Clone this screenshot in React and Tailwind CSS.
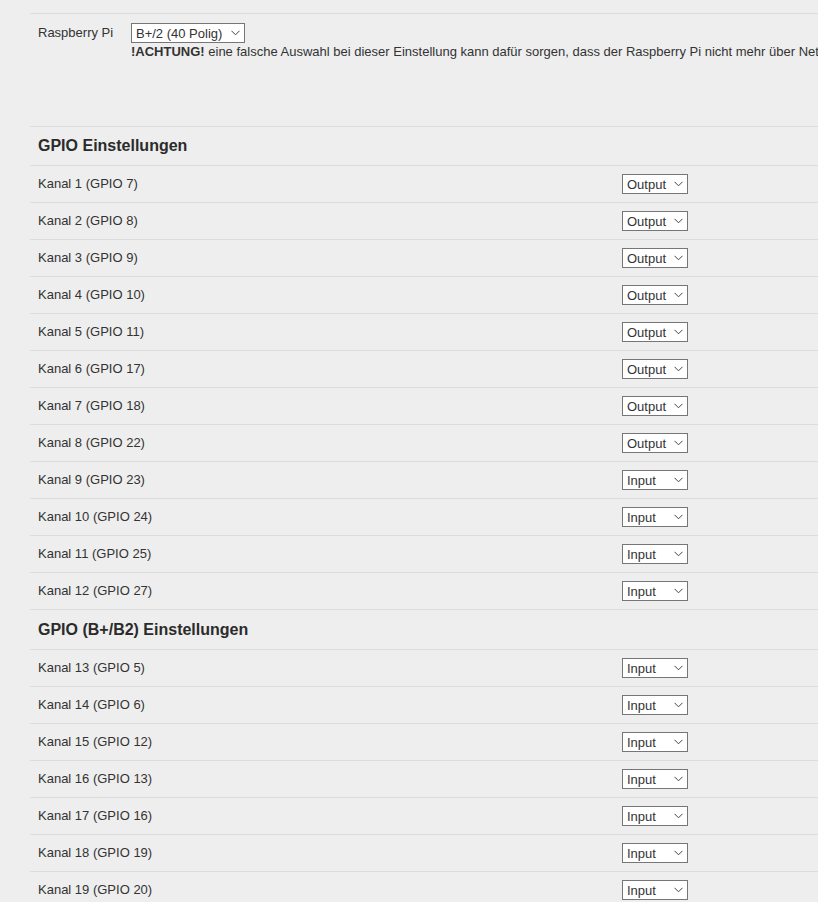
const channels = [
  { name: 'Kanal 1 (GPIO 7)', mode: 'Output' },
  { name: 'Kanal 2 (GPIO 8)', mode: 'Output' },
  { name: 'Kanal 3 (GPIO 9)', mode: 'Output' },
  { name: 'Kanal 4 (GPIO 10)', mode: 'Output' },
  { name: 'Kanal 5 (GPIO 11)', mode: 'Output' },
  { name: 'Kanal 6 (GPIO 17)', mode: 'Output' },
  { name: 'Kanal 7 (GPIO 18)', mode: 'Output' },
  { name: 'Kanal 8 (GPIO 22)', mode: 'Output' },
  { name: 'Kanal 9 (GPIO 23)', mode: 'Input' },
  { name: 'Kanal 10 (GPIO 24)', mode: 'Input' },
  { name: 'Kanal 11 (GPIO 25)', mode: 'Input' },
  { name: 'Kanal 12 (GPIO 27)', mode: 'Input' },
];

const extraChannels = [
  { name: 'Kanal 13 (GPIO 5)', mode: 'Input' },
  { name: 'Kanal 14 (GPIO 6)', mode: 'Input' },
  { name: 'Kanal 15 (GPIO 12)', mode: 'Input' },
  { name: 'Kanal 16 (GPIO 13)', mode: 'Input' },
  { name: 'Kanal 17 (GPIO 16)', mode: 'Input' },
  { name: 'Kanal 18 (GPIO 19)', mode: 'Input' },
  { name: 'Kanal 19 (GPIO 20)', mode: 'Input' },
  { name: 'Kanal 20 (GPIO 21)', mode: 'Input' },
];

// plain dropdown look: white box, grey border, small chevron on the right
function Dropdown({ value, width }) {
  return (
    <div className={`flex h-[20px] ${width} items-center justify-between border border-[#767676] bg-white pl-[4px] pr-[4px]`}>
      <span className="leading-none">{value}</span>
      <svg className="h-[6px] w-[9px] text-[#444]" viewBox="0 0 9 6" fill="none" stroke="currentColor">
        <path d="M0.5 0.8l4 4 4-4" strokeWidth="1" />
      </svg>
    </div>
  );
}

function SectionTitle({ children, height }) {
  return (
    <div className={`flex ${height} items-center border-t border-[#dcdcdc] pl-2 text-[16px] font-bold text-[#2b2b2b]`}>
      {children}
    </div>
  );
}

function ChannelRow({ name, mode }) {
  return (
    <div className="flex h-[37px] items-center border-t border-[#dcdcdc] pl-2">
      <div className="w-[584px] shrink-0">{name}</div>
      <Dropdown value={mode} width="w-[66px]" />
    </div>
  );
}

export default function App() {
  return (
    <div className="min-h-screen overflow-hidden bg-[#eeeeee] font-['Liberation_Sans',Arial,sans-serif] text-[13px] text-[#333]">
      <div className="pl-[30px] pt-[13px]">
        <div className="flex h-[113px] border-t border-[#dcdcdc] pl-2 pt-[9px]">
          <div className="w-[93px] shrink-0 pt-[2px] leading-[16px]">Raspberry Pi</div>
          <div>
            <Dropdown value="B+/2 (40 Polig)" width="w-[114px]" />
            <div className="whitespace-nowrap pt-px leading-[15px]">
              <b>!ACHTUNG!</b> eine falsche Auswahl bei dieser Einstellung kann dafür sorgen, dass der Raspberry Pi nicht mehr über Netzwerk erreichbar ist.
            </div>
          </div>
        </div>

        <SectionTitle height="h-[39px]">GPIO Einstellungen</SectionTitle>
        {channels.map((c) => (
          <ChannelRow key={c.name} name={c.name} mode={c.mode} />
        ))}

        <SectionTitle height="h-[40px]">GPIO (B+/B2) Einstellungen</SectionTitle>
        {extraChannels.map((c) => (
          <ChannelRow key={c.name} name={c.name} mode={c.mode} />
        ))}
      </div>
    </div>
  );
}
